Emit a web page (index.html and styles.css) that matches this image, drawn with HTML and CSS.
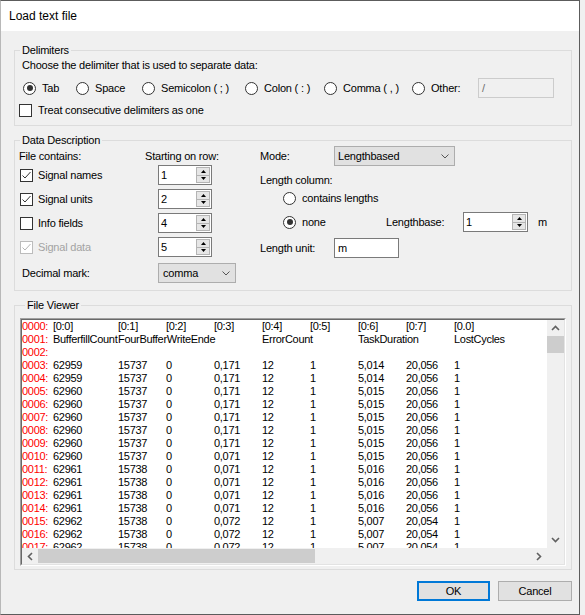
FILE: index.html
```html
<!DOCTYPE html>
<html lang="en">
<head>
  <meta charset="UTF-8">
  <meta name="viewport" content="width=device-width, initial-scale=1.0">
  <title>Load text file</title>
  <link rel="stylesheet" href="styles.css">
</head>
<body>
  <div class="window">
    <div class="titlebar">Load text file</div>
    <div class="client">

      <fieldset class="group delimiters">
        <legend>Delimiters</legend>
        <div class="line">Choose the delimiter that is used to separate data:</div>
        <div class="radio-row">
          <span class="opt w-tab"><span class="radio on"></span>Tab</span>
          <span class="opt w-space"><span class="radio"></span>Space</span>
          <span class="opt w-semi"><span class="radio"></span>Semicolon ( ; )</span>
          <span class="opt w-colon"><span class="radio"></span>Colon ( : )</span>
          <span class="opt w-comma"><span class="radio"></span>Comma ( , )</span>
          <span class="opt w-other"><span class="radio"></span>Other:</span>
          <span class="edit disabled w-otheredit">/</span>
        </div>
        <div class="check-row">
          <span class="check"></span>Treat consecutive delimiters as one
        </div>
      </fieldset>

      <fieldset class="group desc">
        <legend>Data Description</legend>
        <div class="desc-body">
          <div class="desc-left">
            <div class="hdr"><span class="hdr-file">File contains:</span><span>Starting on row:</span></div>
            <div class="sig-rows">
              <div class="sig">
                <span class="sig-name"><span class="check"><svg width="11" height="11" viewBox="0 0 11 11"><polyline points="1.5,5.5 4,8 9.5,2" fill="none" stroke="#333" stroke-width="1"/></svg></span>Signal names</span>
                <div class="spin"><span class="spin-val">1</span><span class="spin-btns"><span class="sb"><svg width="5" height="3" viewBox="0 0 5 3"><polygon points="0,3 2.5,0 5,3" fill="#000"/></svg></span><span class="sb"><svg width="5" height="3" viewBox="0 0 5 3"><polygon points="0,0 2.5,3 5,0" fill="#000"/></svg></span></span></div>
              </div>
              <div class="sig">
                <span class="sig-name"><span class="check"><svg width="11" height="11" viewBox="0 0 11 11"><polyline points="1.5,5.5 4,8 9.5,2" fill="none" stroke="#333" stroke-width="1"/></svg></span>Signal units</span>
                <div class="spin"><span class="spin-val">2</span><span class="spin-btns"><span class="sb"><svg width="5" height="3" viewBox="0 0 5 3"><polygon points="0,3 2.5,0 5,3" fill="#000"/></svg></span><span class="sb"><svg width="5" height="3" viewBox="0 0 5 3"><polygon points="0,0 2.5,3 5,0" fill="#000"/></svg></span></span></div>
              </div>
              <div class="sig">
                <span class="sig-name"><span class="check"></span>Info fields</span>
                <div class="spin"><span class="spin-val">4</span><span class="spin-btns"><span class="sb"><svg width="5" height="3" viewBox="0 0 5 3"><polygon points="0,3 2.5,0 5,3" fill="#000"/></svg></span><span class="sb"><svg width="5" height="3" viewBox="0 0 5 3"><polygon points="0,0 2.5,3 5,0" fill="#000"/></svg></span></span></div>
              </div>
              <div class="sig">
                <span class="sig-name disabled"><span class="check disabled"><svg width="11" height="11" viewBox="0 0 11 11"><polyline points="1.5,5.5 4,8 9.5,2" fill="none" stroke="#b5b5b5" stroke-width="1"/></svg></span>Signal data</span>
                <div class="spin"><span class="spin-val">5</span><span class="spin-btns"><span class="sb"><svg width="5" height="3" viewBox="0 0 5 3"><polygon points="0,3 2.5,0 5,3" fill="#000"/></svg></span><span class="sb"><svg width="5" height="3" viewBox="0 0 5 3"><polygon points="0,0 2.5,3 5,0" fill="#000"/></svg></span></span></div>
              </div>
            </div>
            <div class="decimal">
              <span class="decimal-label">Decimal mark:</span>
              <div class="combo w-dec">comma<svg width="8" height="5" viewBox="0 0 8 5"><polyline points="0.5,0.5 4,4 7.5,0.5" fill="none" stroke="#555" stroke-width="1"/></svg></div>
            </div>
          </div>

          <div class="desc-right">
            <div class="field mode-row">
              <span class="field-label">Mode:</span>
              <div class="combo w-mode">Lengthbased<svg width="8" height="5" viewBox="0 0 8 5"><polyline points="0.5,0.5 4,4 7.5,0.5" fill="none" stroke="#555" stroke-width="1"/></svg></div>
            </div>
            <div class="field lencol-row">Length column:</div>
            <div class="field sub-row"><span class="opt"><span class="radio"></span>contains lengths</span></div>
            <div class="field sub-row none-row">
              <span class="opt w-none"><span class="radio on"></span>none</span>
              <span class="w-lbase">Lengthbase:</span>
              <div class="spin w-lspin"><span class="spin-val">1</span><span class="spin-btns"><span class="sb"><svg width="5" height="3" viewBox="0 0 5 3"><polygon points="0,3 2.5,0 5,3" fill="#000"/></svg></span><span class="sb"><svg width="5" height="3" viewBox="0 0 5 3"><polygon points="0,0 2.5,3 5,0" fill="#000"/></svg></span></span></div>
              <span class="unit">m</span>
            </div>
            <div class="field unit-row">
              <span class="field-label">Length unit:</span>
              <span class="edit w-unit">m</span>
            </div>
          </div>
        </div>
      </fieldset>

      <fieldset class="group viewer">
        <legend>File Viewer</legend>
        <div class="list">
          <div class="list-inner">
            <div class="view">
              <div class="row"><span class="ln">0000:</span><span>[0:0]</span><span>[0:1]</span><span>[0:2]</span><span>[0:3]</span><span>[0:4]</span><span>[0:5]</span><span>[0:6]</span><span>[0:7]</span><span>[0.0]</span></div>
              <div class="row"><span class="ln">0001:</span><span>BufferfillCount</span><span>FourBufferWriteEnde</span><span></span><span></span><span>ErrorCount</span><span></span><span>TaskDuration</span><span></span><span>LostCycles</span></div>
              <div class="row"><span class="ln">0002:</span></div>
              <div class="row"><span class="ln">0003:</span><span>62959</span><span>15737</span><span>0</span><span>0,171</span><span>12</span><span>1</span><span>5,014</span><span>20,056</span><span>1</span></div>
              <div class="row"><span class="ln">0004:</span><span>62959</span><span>15737</span><span>0</span><span>0,171</span><span>12</span><span>1</span><span>5,014</span><span>20,056</span><span>1</span></div>
              <div class="row"><span class="ln">0005:</span><span>62960</span><span>15737</span><span>0</span><span>0,171</span><span>12</span><span>1</span><span>5,015</span><span>20,056</span><span>1</span></div>
              <div class="row"><span class="ln">0006:</span><span>62960</span><span>15737</span><span>0</span><span>0,171</span><span>12</span><span>1</span><span>5,015</span><span>20,056</span><span>1</span></div>
              <div class="row"><span class="ln">0007:</span><span>62960</span><span>15737</span><span>0</span><span>0,171</span><span>12</span><span>1</span><span>5,015</span><span>20,056</span><span>1</span></div>
              <div class="row"><span class="ln">0008:</span><span>62960</span><span>15737</span><span>0</span><span>0,171</span><span>12</span><span>1</span><span>5,015</span><span>20,056</span><span>1</span></div>
              <div class="row"><span class="ln">0009:</span><span>62960</span><span>15737</span><span>0</span><span>0,171</span><span>12</span><span>1</span><span>5,015</span><span>20,056</span><span>1</span></div>
              <div class="row"><span class="ln">0010:</span><span>62960</span><span>15737</span><span>0</span><span>0,071</span><span>12</span><span>1</span><span>5,015</span><span>20,056</span><span>1</span></div>
              <div class="row"><span class="ln">0011:</span><span>62961</span><span>15738</span><span>0</span><span>0,071</span><span>12</span><span>1</span><span>5,016</span><span>20,056</span><span>1</span></div>
              <div class="row"><span class="ln">0012:</span><span>62961</span><span>15738</span><span>0</span><span>0,071</span><span>12</span><span>1</span><span>5,016</span><span>20,056</span><span>1</span></div>
              <div class="row"><span class="ln">0013:</span><span>62961</span><span>15738</span><span>0</span><span>0,071</span><span>12</span><span>1</span><span>5,016</span><span>20,056</span><span>1</span></div>
              <div class="row"><span class="ln">0014:</span><span>62961</span><span>15738</span><span>0</span><span>0,071</span><span>12</span><span>1</span><span>5,016</span><span>20,056</span><span>1</span></div>
              <div class="row"><span class="ln">0015:</span><span>62962</span><span>15738</span><span>0</span><span>0,072</span><span>12</span><span>1</span><span>5,007</span><span>20,054</span><span>1</span></div>
              <div class="row"><span class="ln">0016:</span><span>62962</span><span>15738</span><span>0</span><span>0,072</span><span>12</span><span>1</span><span>5,007</span><span>20,054</span><span>1</span></div>
              <div class="row"><span class="ln">0017:</span><span>62962</span><span>15738</span><span>0</span><span>0,072</span><span>12</span><span>1</span><span>5,007</span><span>20,054</span><span>1</span></div>
            </div>
            <div class="vscroll">
              <span class="arrow-v"><svg width="9" height="6" viewBox="0 0 9 6"><polyline points="1,5 4.5,1.5 8,5" fill="none" stroke="#606060" stroke-width="1.6"/></svg></span>
              <span class="thumb-v"></span>
              <span class="track"></span>
              <span class="arrow-v"><svg width="9" height="6" viewBox="0 0 9 6"><polyline points="1,1 4.5,4.5 8,1" fill="none" stroke="#606060" stroke-width="1.6"/></svg></span>
            </div>
            <div class="hscroll">
              <span class="arrow-h"><svg width="6" height="9" viewBox="0 0 6 9"><polyline points="5,1 1.5,4.5 5,8" fill="none" stroke="#606060" stroke-width="1.6"/></svg></span>
              <span class="thumb-h"></span>
              <span class="track"></span>
              <span class="arrow-h"><svg width="6" height="9" viewBox="0 0 6 9"><polyline points="1,1 4.5,4.5 1,8" fill="none" stroke="#606060" stroke-width="1.6"/></svg></span>
            </div>
            <div class="corner"></div>
          </div>
        </div>
      </fieldset>

      <div class="footer">
        <button class="btn default">OK</button>
        <button class="btn cancel">Cancel</button>
      </div>
    </div>
  </div>
</body>
</html>
```

FILE: styles.css
```css
body {
  margin: 0;
  background-color: #f0f0f0;
  font-family: "Liberation Sans", Arial, sans-serif;
  font-size: 11px;
  letter-spacing: -0.2px;
  color: #000;
}
.window {
  width: 580px;
  height: 615px;
  box-sizing: border-box;
  border: 1px solid #5c5c5c;
  border-left-color: #b8b8b8;
  background-color: #f0f0f0;
  display: flex;
  flex-direction: column;
}
.titlebar {
  height: 30px;
  line-height: 30px;
  padding-left: 8px;
  background-color: #fff;
  font-size: 12px;
  letter-spacing: 0;
}
.client {
  flex: 1;
  padding: 0 7px 0 13px;
}

/* group boxes */
.group {
  margin: 7px 0 0 0;
  padding: 0;
  border: 1px solid #dcdcdc;
  min-width: 0;
}
.group legend {
  margin-left: 5px;
  padding: 0 2px;
  line-height: 14px;
}
.delimiters {
  margin-top: 12px;
  padding-bottom: 6px;
}
.line {
  height: 16px;
  line-height: 16px;
  padding-left: 7px;
}
.radio-row {
  display: flex;
  align-items: center;
  height: 20px;
  margin-top: 5px;
  padding-left: 8px;
}
.check-row {
  display: flex;
  align-items: center;
  gap: 6px;
  height: 18px;
  margin-top: 3px;
  padding-left: 4px;
}

/* controls */
.opt {
  display: inline-flex;
  align-items: center;
  gap: 6px;
  height: 20px;
  white-space: nowrap;
}
.w-tab { width: 53px; }
.w-space { width: 66px; }
.w-semi { width: 103px; }
.w-colon { width: 79px; }
.w-comma { width: 88px; }
.w-other { width: 66px; }
.radio {
  width: 13px;
  height: 13px;
  box-sizing: border-box;
  border: 1px solid #333;
  border-radius: 50%;
  background-color: #fff;
  display: inline-flex;
  align-items: center;
  justify-content: center;
  flex: none;
}
.radio.on::after {
  content: "";
  width: 6px;
  height: 6px;
  border-radius: 50%;
  background-color: #333;
}
.check {
  width: 13px;
  height: 13px;
  box-sizing: border-box;
  border: 1px solid #333;
  background-color: #fff;
  display: inline-flex;
  flex: none;
}
.check svg {
  display: block;
}
.check.disabled {
  border-color: #bcbcbc;
}
.edit {
  display: block;
  box-sizing: border-box;
  height: 20px;
  line-height: 18px;
  padding-left: 3px;
  border: 1px solid #7a7a7a;
  background-color: #fff;
}
.edit.disabled {
  background-color: #f0f0f0;
  border-color: #cccccc;
  color: #6d6d6d;
}
.w-otheredit { width: 76px; }
.w-unit { width: 65px; }
.spin {
  display: flex;
  width: 54px;
  height: 20px;
  box-sizing: border-box;
  border: 1px solid #7a7a7a;
  background-color: #fff;
}
.spin-val {
  flex: 1;
  padding-left: 2px;
  line-height: 18px;
}
.spin-btns {
  display: flex;
  flex-direction: column;
  width: 14px;
  margin: 1px;
}
.sb {
  flex: 1;
  display: flex;
  align-items: center;
  justify-content: center;
  background-color: #e6e6e6;
  border: 1px solid #b4b4b4;
}
.sb + .sb {
  border-top: none;
}
.sb svg {
  display: block;
}
.combo {
  display: flex;
  align-items: center;
  justify-content: space-between;
  box-sizing: border-box;
  height: 20px;
  padding: 0 5px 0 3px;
  border: 1px solid #adadad;
  background-color: #e1e1e1;
}
.w-dec {
  width: 78px;
  padding-left: 4px;
}
.w-mode { width: 121px; }

/* data description */
.desc {
  padding-bottom: 7px;
}
.desc-body {
  display: flex;
  padding-left: 4px;
}
.desc-left {
  width: 241px;
}
.hdr {
  display: flex;
  align-items: center;
  height: 18px;
}
.hdr-file {
  width: 126px;
}
.sig-rows {
  display: flex;
  flex-direction: column;
  gap: 4px;
}
.sig {
  display: flex;
  align-items: center;
  height: 20px;
}
.sig-name {
  display: flex;
  align-items: center;
  gap: 5px;
  width: 138px;
  padding-left: 1px;
}
.sig-name.disabled {
  color: #a3a3a3;
}
.decimal {
  display: flex;
  align-items: center;
  margin-top: 6px;
}
.decimal-label {
  width: 136px;
  padding-left: 3px;
}
.desc-right {
  flex: 1;
}
.field {
  display: flex;
  align-items: center;
}
.field-label {
  width: 74px;
}
.mode-row {
  height: 20px;
  margin-top: -1px;
}
.lencol-row {
  height: 18px;
  margin-top: 5px;
}
.sub-row {
  height: 18px;
  padding-left: 23px;
}
.none-row {
  height: 20px;
  margin-top: 5px;
}
.w-none { width: 103px; }
.w-lbase { width: 77px; }
.w-lspin { width: 65px; }
.unit {
  margin-left: 10px;
}
.unit-row {
  height: 20px;
  margin-top: 6px;
}

/* file viewer */
.viewer {
  padding: 6px 5px 3px 5px;
}
.list {
  height: 248px;
  box-sizing: border-box;
  border: 1px solid;
  border-color: #a0a0a0 #ffffff #ffffff #a0a0a0;
}
.list-inner {
  height: 100%;
  box-sizing: border-box;
  border: 1px solid;
  border-color: #696969 #e3e3e3 #e3e3e3 #696969;
  background-color: #fff;
  display: grid;
  grid-template-columns: 1fr 17px;
  grid-template-rows: 1fr 16px;
}
.view {
  overflow: hidden;
  font-size: 11px;
  letter-spacing: -0.3px;
}
.row {
  display: grid;
  grid-template-columns: 31px 65px repeat(7, 48px) 60px;
  height: 13px;
  line-height: 13px;
  white-space: nowrap;
}
.ln {
  color: #ff0000;
}
.vscroll {
  display: flex;
  flex-direction: column;
  background-color: #f0f0f0;
}
.arrow-v {
  height: 16px;
  display: flex;
  align-items: center;
  justify-content: center;
}
.thumb-v {
  height: 17px;
  background-color: #cdcdcd;
}
.track {
  flex: 1;
}
.hscroll {
  display: flex;
  background-color: #f0f0f0;
}
.arrow-h {
  width: 16px;
  display: flex;
  align-items: center;
  justify-content: center;
}
.thumb-h {
  width: 277px;
  margin: 1px 0;
  background-color: #cdcdcd;
}
.corner {
  background-color: #f0f0f0;
}

/* buttons */
.footer {
  display: flex;
  justify-content: flex-end;
  gap: 8px;
  margin-top: 11px;
}
.btn {
  width: 74px;
  height: 20px;
  box-sizing: border-box;
  padding: 0;
  border: 1px solid #adadad;
  background-color: #e1e1e1;
  font-family: inherit;
  font-size: 11px;
  letter-spacing: -0.2px;
  color: #000;
}
.btn.default {
  width: 73px;
  border: 2px solid #0078d7;
}
```
